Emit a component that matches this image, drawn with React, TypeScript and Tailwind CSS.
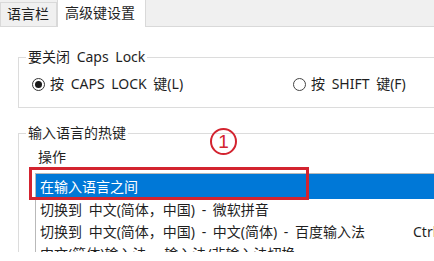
export default function App() {
  const rows = [
    { text: "切换到 中文(简体，中国) - 微软拼音", key: "" },
    { text: "切换到 中文(简体，中国) - 中文(简体) - 百度输入法", key: "Ctrl+Shift+0" },
    { text: "中文(简体)输入法 - 输入法/非输入法切换", key: "" },
  ];

  return (
    <div className="w-[434px] h-[261px] bg-white overflow-hidden relative font-['Noto_Sans','Noto_Sans_CJK_SC',sans-serif] text-[#1f1f1f] [word-spacing:3px]">
      <div className="h-[252px] overflow-hidden">
        {/* Tab strip */}
        <div className="h-[27px] bg-[#f0f0f0] border-b border-[#d9d9d9] flex items-end">
          <div className="h-[24px] w-[57px] bg-[#f0f0f0] border border-b-0 border-[#d9d9d9] text-[14px] leading-[22px] pl-[6px]">
            语言栏
          </div>
          <div className="h-[28px] w-[89px] -mb-px bg-white border border-b-0 border-[#d9d9d9] text-[14px] leading-[26px] pl-[7px]">
            高级键设置
          </div>
        </div>

        <div className="pl-[18px] pt-[20px]">
          {/* Caps Lock group */}
          <fieldset className="w-[440px] h-[61px] border border-[#dcdcdc] px-0">
            <legend className="ml-[7px] px-[2px] text-[14px] leading-[20px]">要关闭 Caps Lock</legend>
            <div className="flex items-center pl-[13px] pt-[7px] text-[14px] leading-[20px]">
              <label className="w-[261px] flex items-center gap-[5px]">
                <span className="w-[13px] h-[13px] rounded-full border border-[#333] flex items-center justify-center">
                  <span className="w-[7px] h-[7px] rounded-full bg-[#1a1a1a]" />
                </span>
                按 CAPS LOCK 键(L)
              </label>
              <label className="flex items-center gap-[5px]">
                <span className="w-[13px] h-[13px] rounded-full border border-[#444]" />
                按 SHIFT 键(F)
              </label>
            </div>
          </fieldset>

          {/* Hotkey group */}
          <fieldset className="mt-[15px] w-[440px] h-[200px] border border-[#dcdcdc] px-0">
            <legend className="ml-[7px] px-[2px] text-[14px] leading-[20px]">输入语言的热键</legend>
            <div className="pl-[19px] pt-[4px] text-[14px] leading-[20px]">操作</div>
            <div className="ml-[16px] mt-[6px] border-l border-t border-[#b9b9b9] text-[14px]">
              <div className="h-[25px] bg-[#0078d7] text-white leading-[25px] pl-[4px]">在输入语言之间</div>
              {rows.map((r) => (
                <div key={r.text} className="h-[22px] leading-[22px] pl-[4px] flex whitespace-nowrap">
                  <span className="w-[373px] shrink-0 overflow-hidden">{r.text}</span>
                  <span className="shrink-0">{r.key}</span>
                </div>
              ))}
            </div>
          </fieldset>
        </div>
      </div>

      {/* annotations */}
      <div className="absolute left-[29px] top-[167px] w-[280px] h-[33px] border-[3px] border-[#d3232f]" />
      <div className="absolute left-[210px] top-[128px] w-[27px] h-[27px] rounded-full border-2 border-[#d3232f] flex items-center justify-center text-[#d3232f] text-[19px] leading-none font-['Liberation_Sans',sans-serif]">
        1
      </div>
    </div>
  );
}
